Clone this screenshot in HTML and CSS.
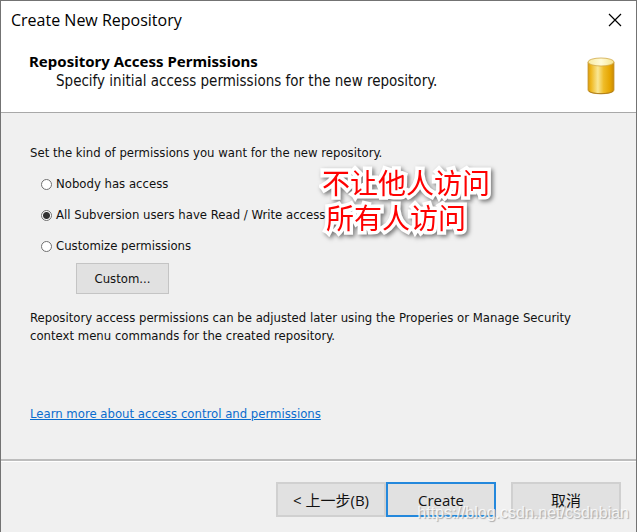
FILE: index.html
```html
<!DOCTYPE html>
<html lang="en">
<head>
<meta charset="utf-8">
<title>Create New Repository</title>
<link rel="stylesheet" href="styles.css">
</head>
<body>
<form class="dialog">
  <div class="titlebar">
    <span class="title">Create New Repository</span>
    <button type="button" class="close" aria-label="Close">
      <svg width="14" height="14" viewBox="0 0 14 14"><path d="M1 1 13 13M13 1 1 13" stroke="#000" stroke-width="1.2"/></svg>
    </button>
  </div>
  <header class="header">
    <div class="heading">
      <h1>Repository Access Permissions</h1>
      <p>Specify initial access permissions for the new repository.</p>
    </div>
    <svg class="cylinder" width="28" height="38" viewBox="0 0 28 38">
      <defs>
        <linearGradient id="side">
          <stop offset="0" stop-color="#d99c10"/>
          <stop offset=".12" stop-color="#efb820"/>
          <stop offset=".38" stop-color="#f9e795"/>
          <stop offset=".6" stop-color="#efbc28"/>
          <stop offset=".85" stop-color="#e5a400"/>
          <stop offset="1" stop-color="#c98a08"/>
        </linearGradient>
        <linearGradient id="lid">
          <stop offset="0" stop-color="#f8eaa0"/>
          <stop offset=".5" stop-color="#fffbd8"/>
          <stop offset="1" stop-color="#f6e48c"/>
        </linearGradient>
      </defs>
      <path d="M1 5V33C1 38 27 38 27 33V5Z" fill="url(#side)" stroke="#c49432" stroke-width=".8"/>
      <path d="M2 34C4 37.500 24 37.500 26 34" fill="none" stroke="#a8750f" stroke-width=".8"/>
      <ellipse cx="14" cy="5" rx="13" ry="4" fill="url(#lid)" stroke="#d0a848" stroke-width=".8"/>
    </svg>
  </header>
  <main class="content">
    <fieldset class="options">
      <legend>Set the kind of permissions you want for the new repository.</legend>
      <label class="option"><input type="radio" name="access">Nobody has access</label>
      <label class="option"><input type="radio" name="access" checked>All Subversion users have Read / Write access</label>
      <label class="option"><input type="radio" name="access">Customize permissions</label>
      <button type="button" class="button custom">Custom...</button>
      <div class="notes" lang="zh-CN"><div>不让他人访问</div><div>所有人访问</div></div>
    </fieldset>
    <p class="hint">Repository access permissions can be adjusted later using the Properies or Manage Security<br>context menu commands for the created repository.</p>
    <a class="learn" href="#">Learn more about access control and permissions</a>
  </main>
  <footer class="footer">
    <button type="button" class="button">&lt; 上一步(B)</button>
    <button type="submit" class="button primary">Create</button>
    <button type="button" class="button cancel">取消</button>
    <span class="watermark">https://blog.csdn.net/csdnbian</span>
  </footer>
</form>
</body>
</html>
```
FILE: styles.css
```css
* {
  box-sizing: border-box;
}

body {
  margin: 0;
  color: #111;
  background: #f0f0f0;
  font: 13px/18px "DejaVu Sans Condensed", "Noto Sans CJK SC", sans-serif;
}

h1,
p {
  margin: 0;
}

button,
input {
  margin: 0;
  font: inherit;
  color: inherit;
}

.dialog {
  display: flex;
  flex-direction: column;
  min-height: 100vh;
  border: 1px solid #737373;
  border-bottom: 0;
  overflow: hidden;
}

.titlebar {
  display: flex;
  justify-content: space-between;
  align-items: center;
  height: 37px;
  padding: 0 13px 0 10px;
  background: #fff;
}

.title {
  color: #000;
  font: 16px/20px "Open Sans", sans-serif;
}

.close {
  display: flex;
  padding: 1px;
  border: 0;
  background: none;
}

.header {
  display: flex;
  justify-content: space-between;
  align-items: flex-start;
  height: 75px;
  padding: 13px 21px 0 28px;
  border-bottom: 1px solid #a8a8a8;
  background: #fff;
}

.heading {
  font-size: 15px;
  line-height: 20px;
}

.heading h1 {
  font-family: "Noto Sans", sans-serif;
  font-size: 15px;
  color: #000;
}

.heading p {
  padding-left: 27px;
}

.cylinder {
  margin-top: 6px;
}

.content {
  flex: 1;
  padding: 31px 28px 0 29px;
}

.options {
  position: relative;
  display: flex;
  flex-direction: column;
  align-items: flex-start;
  margin: 0;
  padding: 0;
  border: 0;
}

.options legend {
  padding: 0;
  margin-bottom: 13px;
}

.option {
  display: flex;
  align-items: center;
  gap: 4px;
  margin: 0 0 13px 11px;
}

.option input {
  appearance: none;
  width: 11px;
  height: 11px;
  border: 1px solid #707070;
  border-radius: 50%;
  background: #fff;
}

.option input:checked {
  background: radial-gradient(circle, #333 3px, #fff 4px);
}

.button {
  min-width: 110px;
  height: 35px;
  padding: 0 8px;
  border: 2px solid #d0d0d0;
  background: #e1e1e1;
  font: 15px/20px "Open Sans", "Noto Sans CJK SC", sans-serif;
}

.custom {
  min-width: 93px;
  height: 31px;
  margin: -5px 0 0 46px;
  border-width: 1px;
  border-color: #c4c4c4;
  font: inherit;
}

.notes {
  position: absolute;
  top: -10px;
  left: 292px;
  color: #f00;
  font: 28px/35px "Noto Sans CJK SC", sans-serif;
  -webkit-text-stroke: 7px #fff;
  paint-order: stroke fill;
  filter: drop-shadow(2px 2px 2px #777);
  white-space: nowrap;
}

.notes div + div {
  padding-left: 4px;
}

.hint {
  margin-top: 15px;
}

.learn {
  display: inline-block;
  margin-top: 60px;
  color: #0a6cce;
}

.footer {
  position: relative;
  display: flex;
  justify-content: flex-end;
  height: 73px;
  padding: 21px 15px 0 0;
  border-top: 2px solid #bdbdbd;
  box-shadow: inset 0 1px #fff;
}

.primary {
  border-color: #2488dc;
}

.cancel {
  margin-left: 15px;
}

.watermark {
  position: absolute;
  right: 7px;
  bottom: 9px;
  color: #fffc;
  font: 16px/20px "Liberation Sans", sans-serif;
  text-shadow: 1px 1px 1px #aaa;
  white-space: nowrap;
}
```
